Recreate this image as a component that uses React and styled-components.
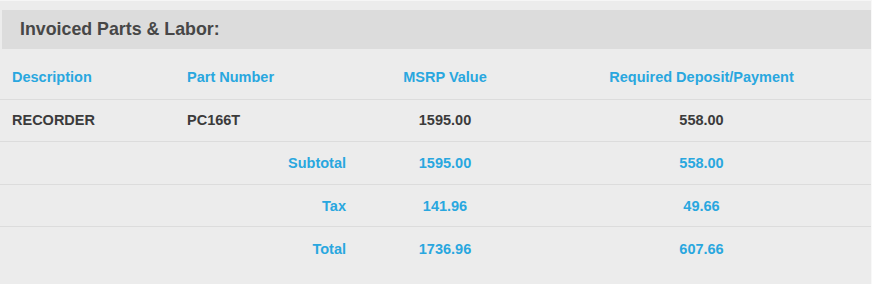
import styled, { createGlobalStyle } from "styled-components";

const GlobalStyle = createGlobalStyle`
    body {
        margin: 0;
        background: #ececec;
        font-family: "Liberation Sans", Arial, sans-serif;
    }
`;

const Page = styled.div`
    width: 871px;
    height: 283px;
    border-top: 1px solid #f6f6f6;
    border-right: 1px solid #f8f8f8;
    background: #ececec;
    padding-top: 9px;
`;

const Header = styled.div`
    display: flex;
    align-items: center;
    height: 39px;
    margin-left: 2px;
    padding-left: 18px;
    background: #dcdcdc;
    color: #474747;
    font-size: 17.8px;
    font-weight: bold;
`;

const Table = styled.table`
    width: 871px;
    border-collapse: collapse;
    table-layout: fixed;
    font-size: 14.5px;
    font-weight: bold;
`;

const Row = styled.tr`
    height: ${(p) => p.$height}px;
    border-top: ${(p) => (p.$head ? "none" : "1px solid #dcdcdc")};
`;

const Cell = styled.td`
    padding: ${(p) => p.$top || 0}px 12px 0;
    text-align: ${(p) => p.$align || "left"};
    color: ${(p) => (p.$blue ? "#29a7df" : "#3b3b3b")};
    white-space: nowrap;
`;

const items = [
    { desc: "RECORDER", part: "PC166T", msrp: "1595.00", deposit: "558.00" },
];

const totals = [
    { label: "Subtotal", msrp: "1595.00", deposit: "558.00", height: 43, top: 1 },
    { label: "Tax", msrp: "141.96", deposit: "49.66", height: 42, top: 2 },
    { label: "Total", msrp: "1736.96", deposit: "607.66", height: 43, top: 3 },
];

function App() {
    return (
        <Page>
            <GlobalStyle />
            <Header>Invoiced Parts &amp; Labor:</Header>
            <Table>
                <colgroup>
                    <col style={{ width: "175px" }} />
                    <col style={{ width: "183px" }} />
                    <col style={{ width: "174px" }} />
                    <col style={{ width: "339px" }} />
                </colgroup>
                <tbody>
                    <Row $head $height={50}>
                        <Cell $blue $top={6}>Description</Cell>
                        <Cell $blue $top={6}>Part Number</Cell>
                        <Cell $blue $top={6} $align="center">MSRP Value</Cell>
                        <Cell $blue $top={6} $align="center">Required Deposit/Payment</Cell>
                    </Row>
                    {items.map((p, index) => (
                        <Row key={index} $height={42}>
                            <Cell>{p.desc}</Cell>
                            <Cell>{p.part}</Cell>
                            <Cell $align="center">{p.msrp}</Cell>
                            <Cell $align="center">{p.deposit}</Cell>
                        </Row>
                    ))}
                    {totals.map((t) => (
                        <Row key={t.label} $height={t.height}>
                            <Cell />
                            <Cell $blue $top={t.top} $align="right">{t.label}</Cell>
                            <Cell $blue $top={t.top} $align="center">{t.msrp}</Cell>
                            <Cell $blue $top={t.top} $align="center">{t.deposit}</Cell>
                        </Row>
                    ))}
                </tbody>
            </Table>
        </Page>
    );
}

export default App;
